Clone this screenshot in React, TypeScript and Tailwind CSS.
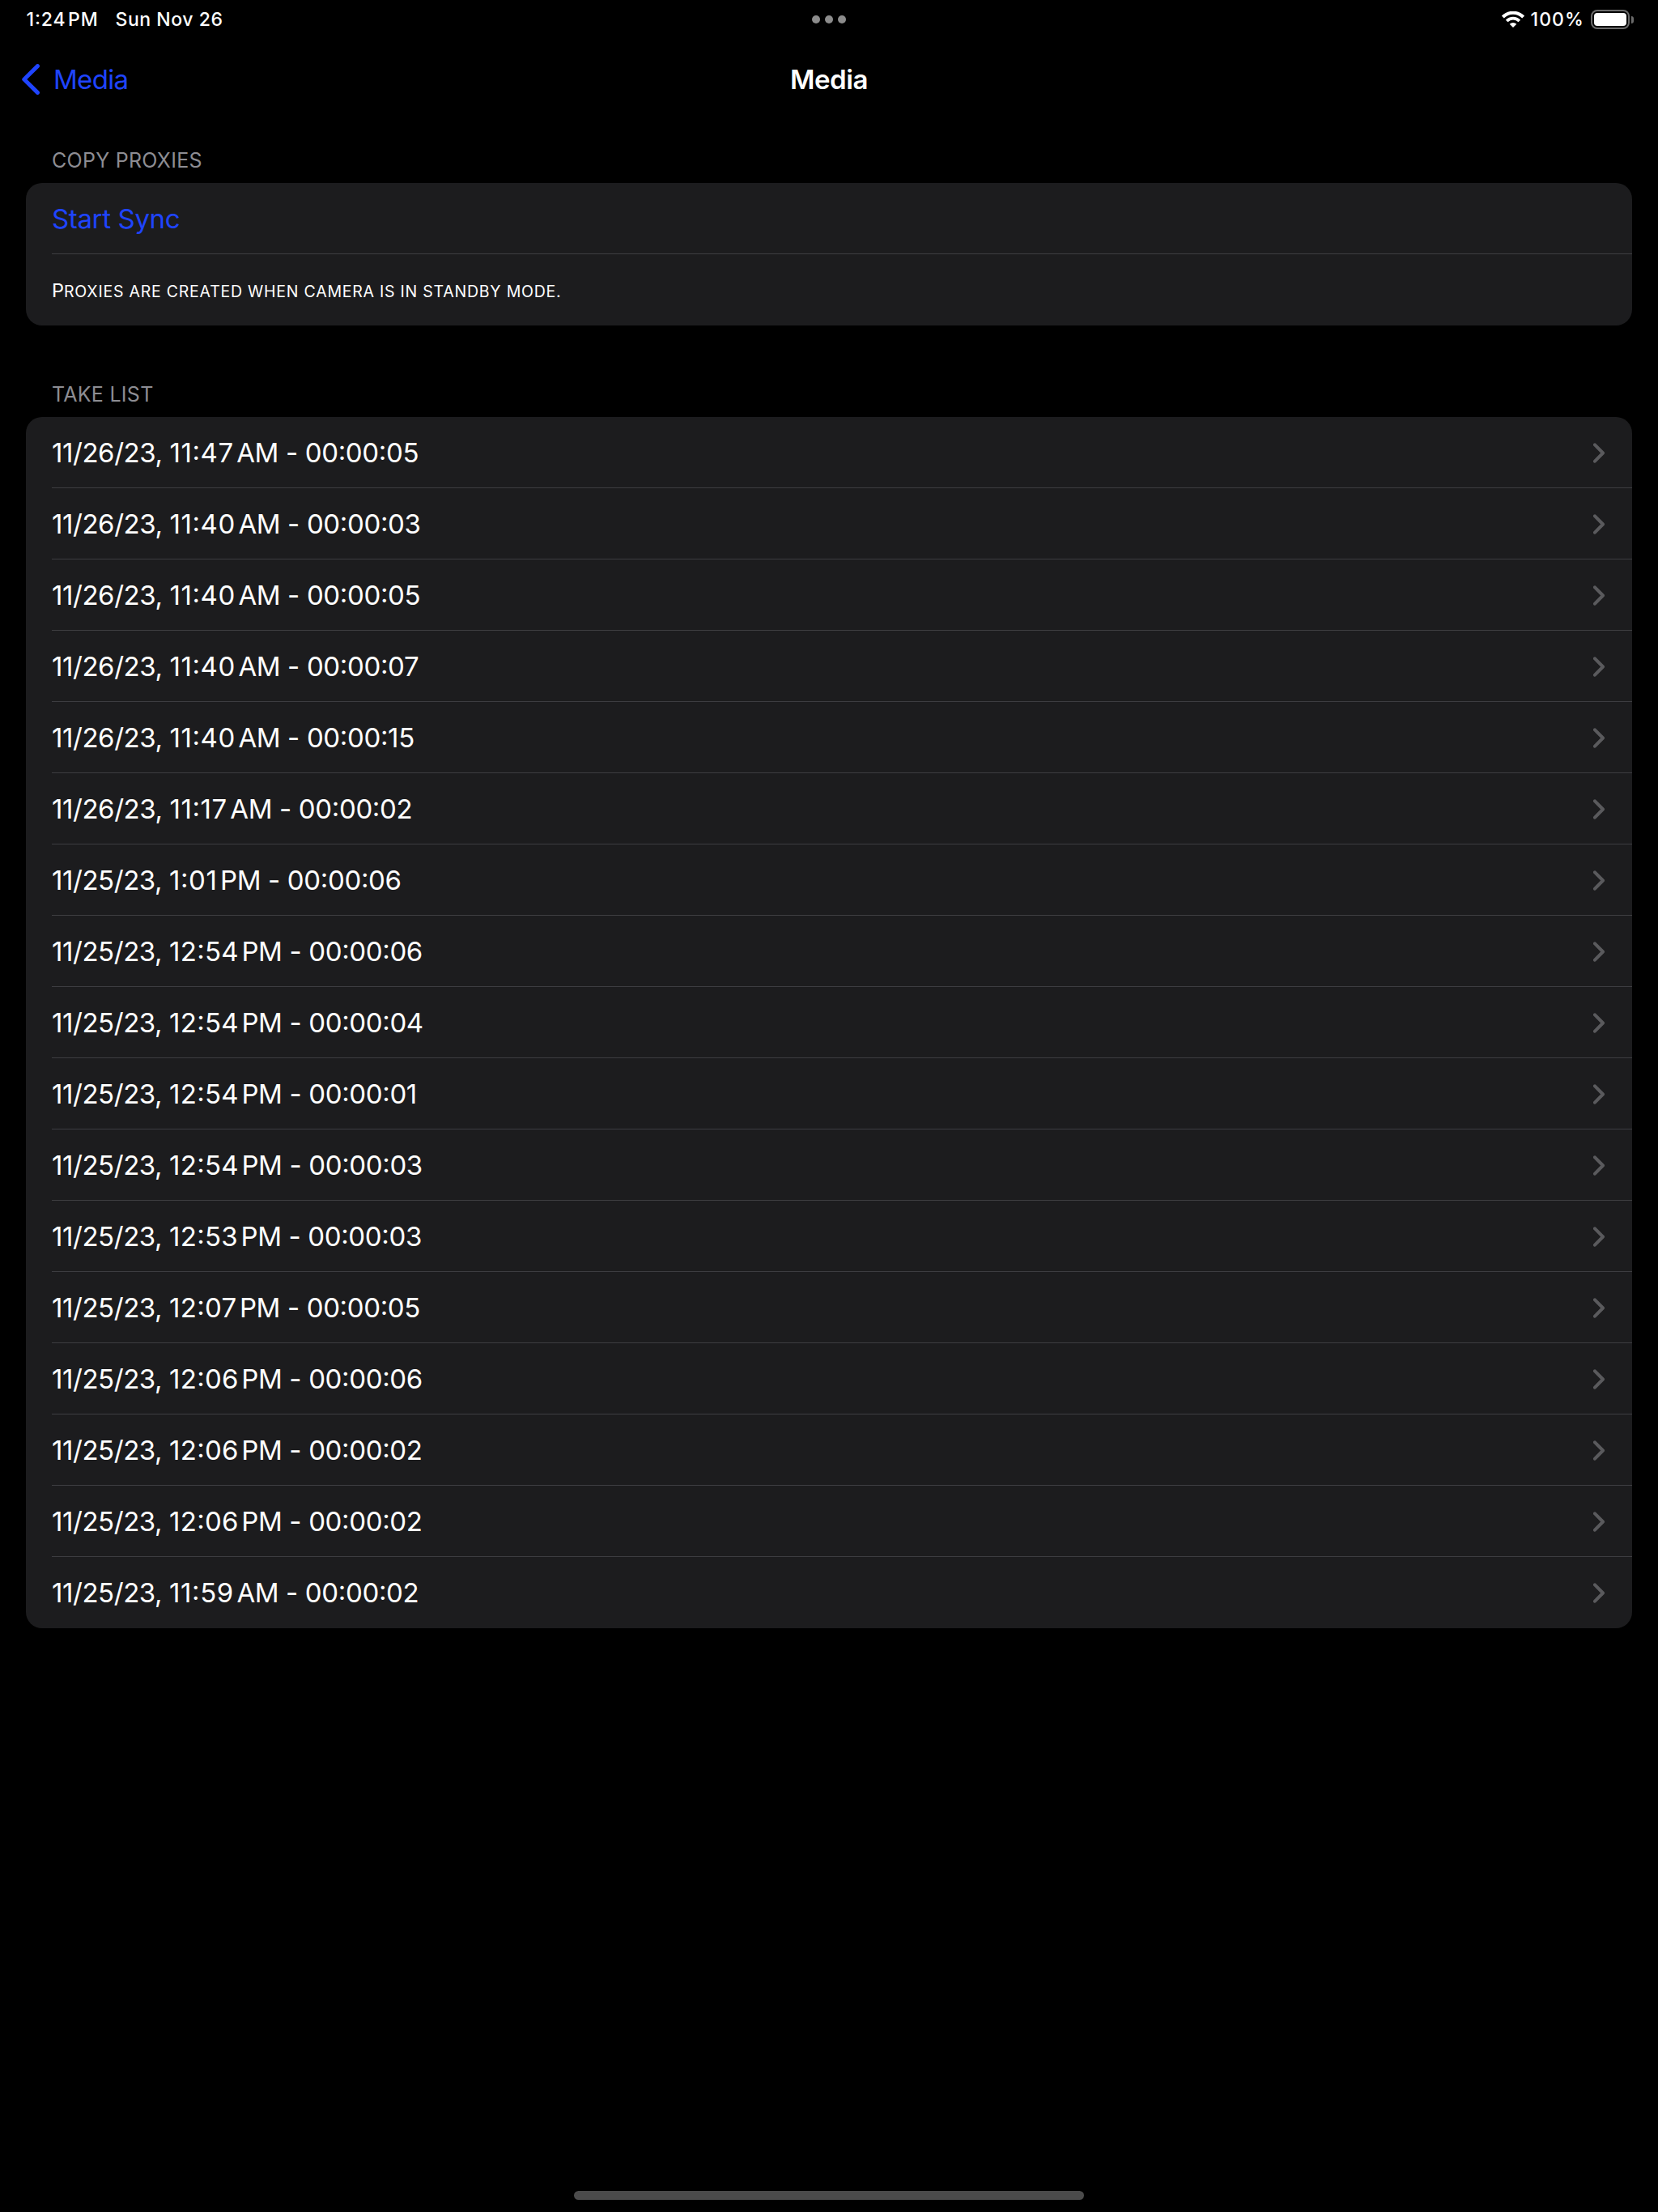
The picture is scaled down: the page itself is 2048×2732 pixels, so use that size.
const takes: [string, string, string, string][] = [
  ["11/26/23", "11:47", "AM", "00:00:05"],
  ["11/26/23", "11:40", "AM", "00:00:03"],
  ["11/26/23", "11:40", "AM", "00:00:05"],
  ["11/26/23", "11:40", "AM", "00:00:07"],
  ["11/26/23", "11:40", "AM", "00:00:15"],
  ["11/26/23", "11:17", "AM", "00:00:02"],
  ["11/25/23", "1:01", "PM", "00:00:06"],
  ["11/25/23", "12:54", "PM", "00:00:06"],
  ["11/25/23", "12:54", "PM", "00:00:04"],
  ["11/25/23", "12:54", "PM", "00:00:01"],
  ["11/25/23", "12:54", "PM", "00:00:03"],
  ["11/25/23", "12:53", "PM", "00:00:03"],
  ["11/25/23", "12:07", "PM", "00:00:05"],
  ["11/25/23", "12:06", "PM", "00:00:06"],
  ["11/25/23", "12:06", "PM", "00:00:02"],
  ["11/25/23", "12:06", "PM", "00:00:02"],
  ["11/25/23", "11:59", "AM", "00:00:02"],
];

function StatusBar() {
  return (
    <div className="grid h-[48px] grid-cols-3 items-center text-[23px] font-medium leading-none">
      <div className="flex pl-[32.5px] pt-[1px]">
        <span className="w-[110px] whitespace-nowrap tracking-[0.9px]">
          1:24<span className="tracking-[-1.5px]">{"\u202f"}</span>PM
        </span>
        <span className="whitespace-nowrap tracking-[0.55px]">Sun Nov 26</span>
      </div>
      <div className="flex justify-center gap-[6px]">
        <i className="size-[10px] rounded-full bg-[#8c8c8c]" />
        <i className="size-[10px] rounded-full bg-[#8c8c8c]" />
        <i className="size-[10px] rounded-full bg-[#8c8c8c]" />
      </div>
      <div className="flex items-center justify-end pr-[30px]">
        <svg width="28" height="20" viewBox="0 0 28 20" className="mr-[8px]" fill="none" stroke="#fff">
          <path d="M1.4 7 A17.6 17.6 0 0 1 26.6 7" strokeWidth="4" />
          <path d="M6.2 12 A10.8 10.8 0 0 1 21.8 12" strokeWidth="3.8" />
          <path d="M14 20 L9.7 15.7 A6 6 0 0 1 18.3 15.7 Z" fill="#fff" stroke="none" />
        </svg>
        <span className="mr-[8px] pt-[1px] tracking-[1.1px]">100%</span>
        <span className="flex h-[24px] w-[48px] rounded-[8px] border-2 border-[#6b6b6b] p-[2px]">
          <i className="flex-1 rounded-[4px] bg-white" />
        </span>
        <i className="ml-[2px] h-[9px] w-[3px] rounded-r-full bg-[#6b6b6b]" />
      </div>
    </div>
  );
}

function NavBar() {
  return (
    <div className="grid h-[100px] grid-cols-3 items-center text-[33px] leading-none">
      <div className="flex items-center pl-[27px] text-[#1f44ff]">
        <svg width="22" height="38" viewBox="0 0 22 38" fill="none" stroke="currentColor" strokeWidth="5" strokeLinecap="round" strokeLinejoin="round">
          <path d="M19.4 2.6 L2.8 19 L19.4 35.4" />
        </svg>
        <span className="pl-[17px] tracking-[-0.7px]">Media</span>
      </div>
      <div className="text-center font-semibold tracking-[-0.45px]">Media</div>
    </div>
  );
}

function Header({ children }: { children: string }) {
  return (
    <h2 className="flex h-[57px] items-center pl-[32px] pt-[2px] text-[25px] leading-none tracking-[0.27px] text-[#8d8d93]">{children}</h2>
  );
}

function Chevron() {
  return (
    <svg width="14" height="26" viewBox="0 0 14 26" fill="none" stroke="#5a5a5d" strokeWidth="4" strokeLinecap="round" strokeLinejoin="round">
      <path d="M2 3.3 L12 13.5 L2 23.7" />
    </svg>
  );
}

const rowClass = "flex h-[88px] items-center justify-between border-b border-[#3d3d41] pr-[34px] leading-none last:border-transparent";

export default function App() {
  return (
    <div className="flex h-[2732px] w-[2048px] flex-col bg-black font-['Inter',sans-serif] text-white [font-feature-settings:'calt'_1]">
      <StatusBar />
      <NavBar />
      <main className="flex-1 px-[32px] pt-[21px]">
        <Header>COPY PROXIES</Header>
        <section className="rounded-[20px] bg-[#1c1c1e] pl-[32px]">
          <div className={rowClass}>
            <span className="pt-[2px] text-[33px] tracking-[-0.35px] text-[#1f44ff]">Start Sync</span>
          </div>
          <div className={rowClass}>
            <span className="pt-[2px] text-[19.5px] uppercase tracking-[0.77px]">
              <span className="text-[23.5px] tracking-normal">P</span>roxies are created when camera is in standby mode.
            </span>
          </div>
        </section>
        <div className="h-[56px]" />
        <Header>TAKE LIST</Header>
        <section className="rounded-[20px] bg-[#1c1c1e] pl-[32px]">
          {takes.map(([date, time, meridiem, duration], i) => (
            <div key={i} className={rowClass}>
              <span className="whitespace-pre pt-[2px] text-[33px] tracking-[-0.35px]">
                <span className="tracking-[-0.44px]">{date}, </span>
                <span className={time.startsWith("12") ? "tracking-[0.3px]" : "tracking-[0.6px]"}>{time}</span>
                <span className="tracking-[-2.5px]">{"\u202f"}</span>
                <span className="tracking-[-0.4px]">{meridiem}</span>
                <span className="[font-feature-settings:'calt'_0]">{" - "}</span>
                {duration}
              </span>
              <Chevron />
            </div>
          ))}
        </section>
      </main>
      <div className="flex h-[26px] justify-center">
        <i className="h-[11px] w-[630px] rounded-full bg-[#4b4b4b]" />
      </div>
    </div>
  );
}
